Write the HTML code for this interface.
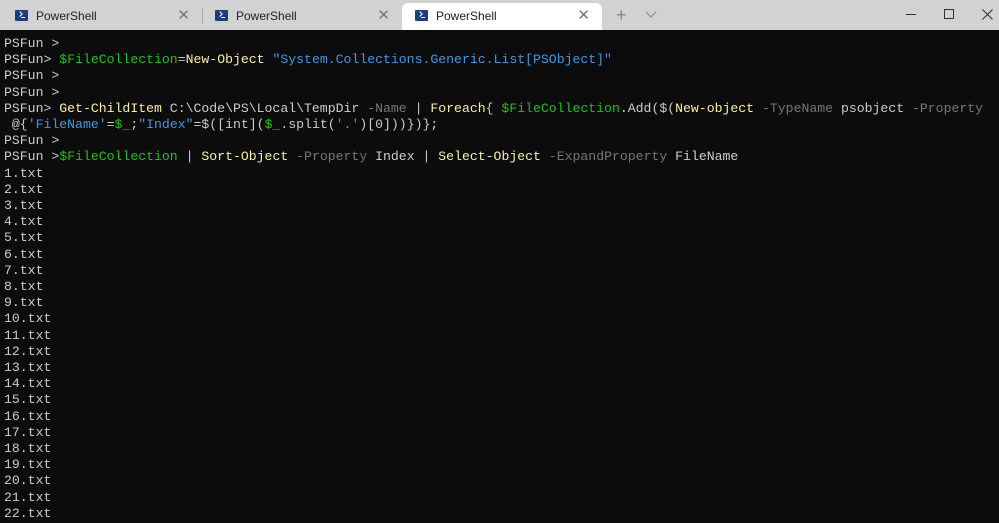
<!DOCTYPE html>
<html><head><meta charset="utf-8"><style>
*{margin:0;padding:0;box-sizing:border-box}
body{width:999px;height:523px;overflow:hidden;background:#0c0c0c;font-family:"Liberation Sans",sans-serif}
#bar{position:absolute;left:0;top:0;width:999px;height:30px;background:#d2d2d2}
.tab{position:absolute;top:3px;height:27px;width:200px;font-size:12px;color:#222}
.tab .ic{position:absolute;left:13px;top:7px;width:13px;height:11px;background:#1f3d7a;border-radius:1px}
.tab .ic:before{content:"";position:absolute;left:3px;top:2px;width:3px;height:3px;border-right:1.3px solid #fff;border-bottom:1.3px solid #fff;transform:rotate(-45deg)}
.tab .ic:after{content:"";position:absolute;left:6px;top:7px;width:4px;height:1.3px;background:#fff}
.tab .t{position:absolute;left:34px;top:6px}
.tab .x{position:absolute;right:12px;top:3px;font-size:15px;color:#777}
.sep{position:absolute;left:202px;top:8px;width:1px;height:16px;background:#aaa}
.act{background:#fff;border-radius:6px 6px 0 0}
#term{position:absolute;left:4px;top:36px;font-family:"Liberation Mono",monospace;font-size:13.17px;line-height:16.2px;color:#cccccc;white-space:pre}
.g{color:#16c60c}.y{color:#f9f1a5}.b{color:#3b9ae8}.d{color:#767676}
</style></head><body>
<div id="bar">
<div class="tab" style="left:2px"><div class="ic"></div><span class="t">PowerShell</span><span class="x">✕</span></div>
<div class="sep"></div>
<div class="tab" style="left:202px"><div class="ic"></div><span class="t">PowerShell</span><span class="x">✕</span></div>
<div class="tab act" style="left:402px"><div class="ic"></div><span class="t">PowerShell</span><span class="x">✕</span></div>
<div style="position:absolute;left:616px;top:5px;font-size:18px;color:#888">+</div>
<svg style="position:absolute;left:645px;top:11px" width="12" height="8"><path d="M1 1 L6 6 L11 1" stroke="#888" fill="none" stroke-width="1.2"/></svg>
<div style="position:absolute;left:906px;top:14px;width:10px;height:1px;background:#333"></div>
<div style="position:absolute;left:944px;top:9px;width:10px;height:10px;border:1px solid #333"></div>
<svg style="position:absolute;left:982px;top:9px" width="11" height="11"><path d="M0.5 0.5 L10.5 10.5 M10.5 0.5 L0.5 10.5" stroke="#333" stroke-width="1.1"/></svg>
</div>
<div id="term">PSFun &gt;
PSFun&gt; <span class="g">$FileCollection</span>=<span class="y">New-Object</span> <span class="b">"System.Collections.Generic.List[PSObject]"</span>
PSFun &gt;
PSFun &gt;
PSFun&gt; <span class="y">Get-ChildItem</span> C:\Code\PS\Local\TempDir <span class="d">-Name</span> | <span class="y">Foreach</span>{ <span class="g">$FileCollection</span>.Add($(<span class="y">New-object</span> <span class="d">-TypeName</span> psobject <span class="d">-Property</span>
 @{<span class="b">'FileName'</span>=<span class="g">$_</span>;<span class="b">"Index"</span>=$([int](<span class="g">$_</span>.split(<span class="b">'.'</span>)[0]))})};
PSFun &gt;
PSFun &gt;<span class="g">$FileCollection</span> | <span class="y">Sort-Object</span> <span class="d">-Property</span> Index | <span class="y">Select-Object</span> <span class="d">-ExpandProperty</span> FileName
1.txt
2.txt
3.txt
4.txt
5.txt
6.txt
7.txt
8.txt
9.txt
10.txt
11.txt
12.txt
13.txt
14.txt
15.txt
16.txt
17.txt
18.txt
19.txt
20.txt
21.txt
22.txt</div>
</body></html>
